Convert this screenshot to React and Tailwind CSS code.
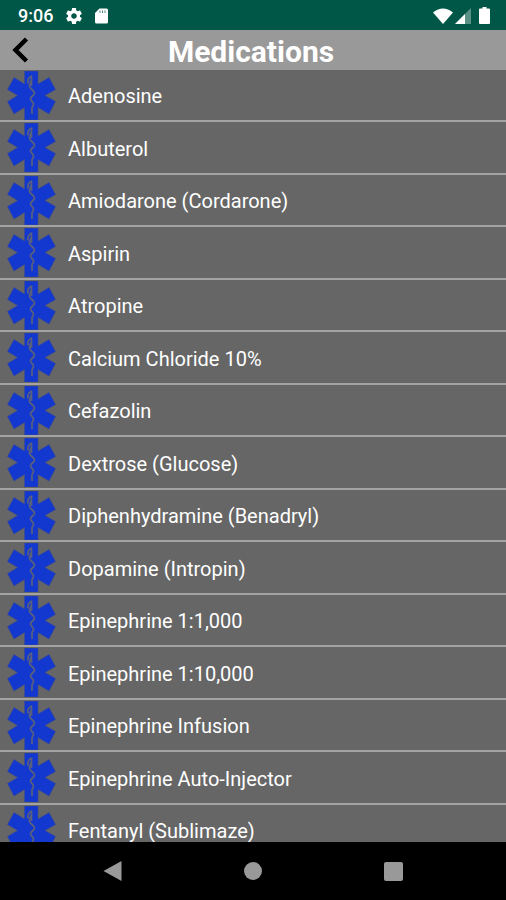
const medications = [
  'Adenosine',
  'Albuterol',
  'Amiodarone (Cordarone)',
  'Aspirin',
  'Atropine',
  'Calcium Chloride 10%',
  'Cefazolin',
  'Dextrose (Glucose)',
  'Diphenhydramine (Benadryl)',
  'Dopamine (Intropin)',
  'Epinephrine 1:1,000',
  'Epinephrine 1:10,000',
  'Epinephrine Infusion',
  'Epinephrine Auto-Injector',
  'Fentanyl (Sublimaze)',
];

function StarOfLife() {
  return (
    <svg viewBox="0 0 49 49" className="h-[49px] w-[49px] shrink-0" aria-hidden="true">
      <path
        d="M17.500 0H31V13L42 6.500L48.500 18.500L38 24.500L48.500 30.500L42 43L31 36.500V49H17.500V36.500L7 43L0.500 30.500L10.500 24.500L0.500 18.500L7 6.500L17.500 13Z"
        fill="#1338cf"
        stroke="#3c4c8c"
        strokeWidth="0.6"
      />
      <path
        d="M24.500 4.500V15M24.500 5C21.500 6.500 20.500 9.500 21 12.500M24 9L22.500 14C21.500 18 27.500 19 27.500 22C27.500 25 23.500 25 23.500 28C23.500 30 27 31 26.500 33.500C26 35.500 24.500 36 25 38V43"
        fill="none"
        stroke="#5a607c"
        strokeWidth="1.7"
        strokeLinejoin="round"
      />
    </svg>
  );
}

function StatusBar() {
  return (
    <div className="flex h-[30px] shrink-0 items-center bg-[#005748] pt-px pr-4 pl-[18px] text-white">
      <span className="w-12 text-lg leading-6 font-medium">9:06</span>
      <svg viewBox="2 2 20 20" className="h-4 w-4" fill="currentColor" aria-hidden="true">
        <path d="M19.430 12.980c.04-.32.070-.64.070-.98s-.03-.66-.07-.98l2.110-1.650c.19-.15.240-.42.120-.64l-2-3.460c-.12-.22-.39-.3-.61-.22l-2.490 1c-.52-.4-1.080-.73-1.690-.98l-.38-2.650C14.460 2.180 14.250 2 14 2h-4c-.25 0-.46.180-.49.420l-.38 2.650c-.61.250-1.170.590-1.690.980l-2.490-1c-.23-.09-.49 0-.61.220l-2 3.460c-.13.220-.07.490.120.640l2.110 1.650c-.04.320-.07.650-.07.980s.030.660.070.980l-2.110 1.650c-.19.150-.24.420-.12.640l2 3.460c.12.220.390.300.610.220l2.490-1c.52.400 1.080.730 1.690.980l.38 2.650c.03.240.240.420.490.420h4c.25 0 .46-.18.490-.42l.38-2.650c.61-.25 1.170-.59 1.690-.98l2.490 1c.23.090.490 0 .61-.22l2-3.460c.12-.22.070-.49-.12-.64zM12 15.500c-1.930 0-3.500-1.570-3.500-3.500s1.570-3.500 3.500-3.500 3.500 1.570 3.500 3.500-1.570 3.500-3.500 3.500z" />
      </svg>
      <svg viewBox="0 0 13 16" className="ml-[13px] h-4 w-[13px]" aria-hidden="true">
        <path d="M4.500 0.500H11.500Q13 .5 13 2V14Q13 15.500 11.500 15.500H1.500Q0 15.500 0 14V5Z" fill="currentColor" />
        <path d="M5 2.500V5M7.500 2.500V5M10 2.500V5" stroke="#005748" strokeWidth="1" opacity="0.7" />
      </svg>
      <div className="ml-auto flex items-center">
        <svg viewBox="0 0 20 16" className="h-4 w-5" fill="currentColor" aria-hidden="true">
          <path d="M0 4.500Q10-3.500 20 4.500L10 16Z" />
        </svg>
        <svg viewBox="0 0 16 16" className="ml-0.5 h-4 w-4" fill="currentColor" aria-hidden="true">
          <path d="M16 0V16H0Z" opacity="0.35" />
          <path d="M10 6V16H0Z" />
        </svg>
        <svg viewBox="0 0 11 17" className="ml-2 h-[17px] w-[11px]" fill="currentColor" aria-hidden="true">
          <path d="M3.500 0H7.500V1.500H10Q11 1.500 11 2.500V16Q11 17 10 17H1Q0 17 0 16V2.500Q0 1.500 1 1.500H3.500Z" />
        </svg>
      </div>
    </div>
  );
}

function Header() {
  return (
    <header className="grid h-10 shrink-0 grid-cols-[48px_1fr_48px] items-center bg-[#999999]">
      <button type="button" aria-label="Back" className="flex h-10 items-center pl-3">
        <svg viewBox="0 0 18 26" className="h-[26px] w-[18px]" aria-hidden="true">
          <path d="M14.500 2L3.500 13L14.500 24" fill="none" stroke="black" strokeWidth="4.500" />
        </svg>
      </button>
      <h1 className="pt-1 pr-1 text-center text-3xl leading-9 font-bold text-white">Medications</h1>
    </header>
  );
}

function NavigationBar() {
  return (
    <nav className="grid h-[58px] shrink-0 grid-cols-3 items-center bg-black px-[43px] text-[#999999]">
      <button type="button" aria-label="Back" className="flex justify-center">
        <svg viewBox="0 0 20 20" className="h-5 w-5" fill="currentColor" aria-hidden="true">
          <path d="M0.500 10L18.500 0V20Z" />
        </svg>
      </button>
      <button type="button" aria-label="Home" className="flex justify-center">
        <span className="h-[18px] w-[18px] rounded-full bg-current" />
      </button>
      <button type="button" aria-label="Recent apps" className="flex justify-center">
        <span className="h-[19px] w-[19px] rounded-xs bg-current" />
      </button>
    </nav>
  );
}

export default function App() {
  return (
    <div className="flex h-screen flex-col bg-[#666666] font-[Roboto,sans-serif]">
      <StatusBar />
      <Header />
      <main className="min-h-0 flex-1 overflow-hidden">
        <ul>
          {medications.map((name) => (
            <li key={name} className="border-b-2 border-[#a3a3a3] odd:h-[52px] even:h-[53px]">
              <button type="button" className="flex h-full w-full items-center gap-3 pl-[7px] text-left text-xl leading-6 text-white">
                <StarOfLife />
                <span className="pt-0.5">{name}</span>
              </button>
            </li>
          ))}
        </ul>
      </main>
      <NavigationBar />
    </div>
  );
}
